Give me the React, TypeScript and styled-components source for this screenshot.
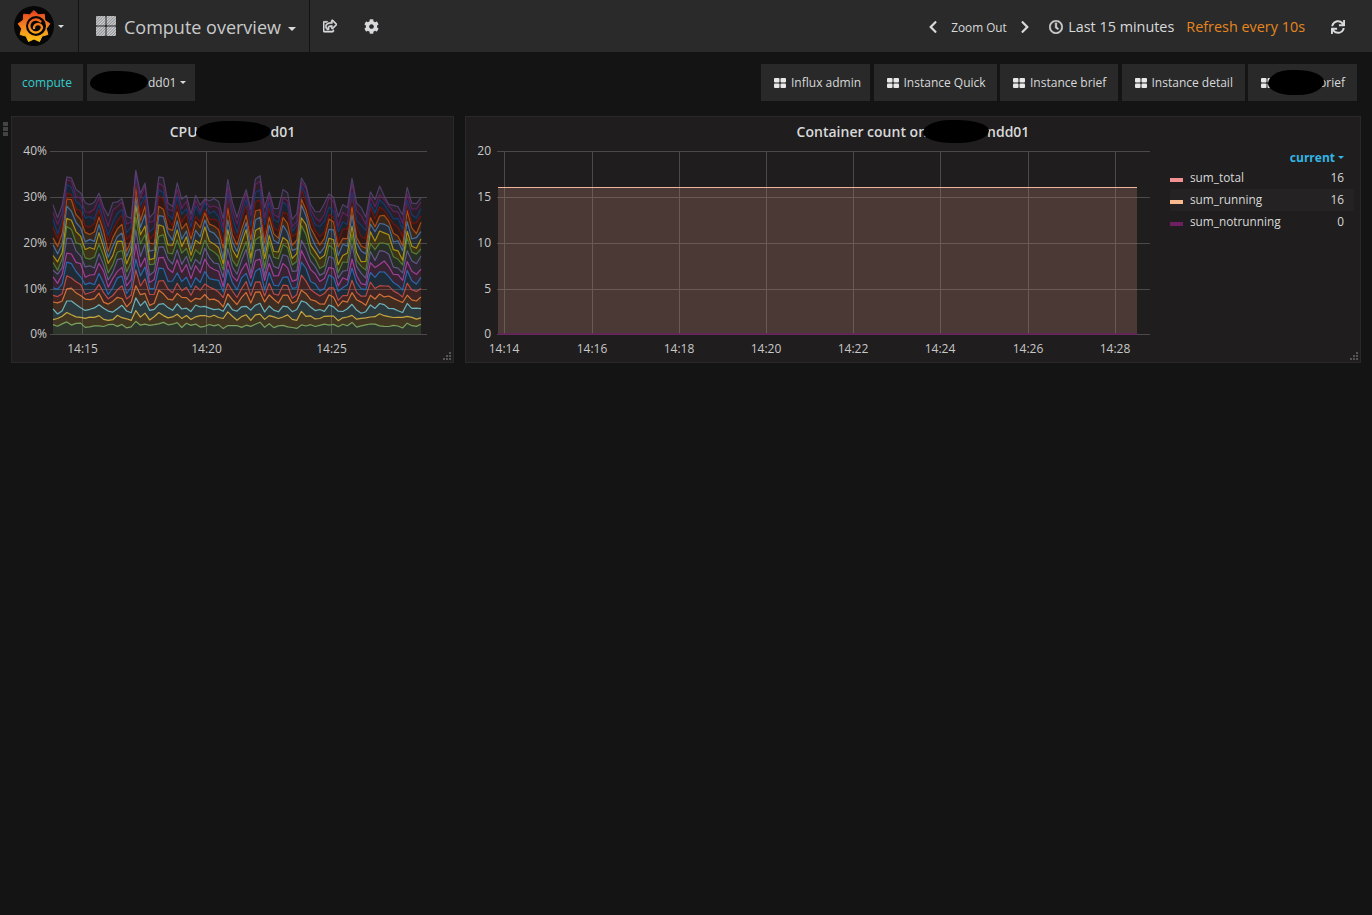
import React from "react";
import styled, { createGlobalStyle } from "styled-components";
import {
  FaChevronLeft,
  FaChevronRight,
  FaCog,
  FaRegClock,
  FaRegShareSquare,
  FaSync,
} from "react-icons/fa";

const GlobalStyle = createGlobalStyle`
  html, body {
    margin: 0;
    padding: 0;
    background: #141414;
    font-family: "Open Sans", "Liberation Sans", sans-serif;
    color: #d8d9da;
  }
`;

const PALETTE = [
  "#7eb26d", "#eab839", "#6ed0e0", "#ef843c",
  "#e24d42", "#1f78c1", "#ba43a9", "#705da0",
  "#508642", "#cca300", "#447ebc", "#c15c17",
  "#890f02", "#0a437c", "#6d1f62", "#584477",
];

const PEAKS: [number, number][] = [
  [69, 37], [78, 34], [100, 32], [120, 32], [136, 36], [145, 33], [161, 37],
  [170, 31], [178, 34], [187, 31], [197, 32], [207, 32], [216, 32], [228, 34],
  [245, 33], [258, 37], [270, 32], [285, 34], [303, 36], [312, 30], [331, 33],
  [352, 34], [372, 33], [381, 34], [391, 31], [408, 33], [420, 31],
];

// where the lower lines shoot up together
const BURSTS = [69, 136, 205, 303, 387];

const rand = (seed: number) => {
  const x = Math.sin(seed * 127.1 + 311.7) * 43758.5453;
  return x - Math.floor(x);
};

const cpuX = (i: number) => 53 + i * 4.6;
const cpuY = (v: number) => 334 - v * 4.575;
const POINTS = 81;

const buildCpuSeries = () => {
  const totals: number[] = [];
  const swell: number[] = [];
  for (let i = 0; i < POINTS; i++) {
    const x = cpuX(i);
    let v = 25 + rand(i) * 4;
    let c = -0.08 + rand(i + 200) * 0.14;
    PEAKS.forEach(([px, h]) => {
      const d = Math.abs(x - px);
      if (d < 4.5) {
        v = Math.max(v, h - d * 1.2);
        c = Math.max(c, 0.1 + rand(px) * 0.08 - d * 0.02);
      }
    });
    BURSTS.forEach((px) => {
      const d = Math.abs(x - px);
      if (d < 7) c = Math.max(c, 0.28 - d * 0.035);
    });
    totals.push(v);
    swell.push(c);
  }
  const toPoints = (vals: number[]) =>
    vals.map((v, i) => `${cpuX(i).toFixed(1)},${cpuY(v).toFixed(1)}`);
  let lower = totals.map(() => 0);
  return PALETTE.map((color, s) => {
    const share = (s + 1) / 16;
    const upper = totals.map((t, i) => {
      const bulge = 1 + swell[i] * Math.sin(Math.PI * share);
      const own = s === 15 ? 0 : (rand(i * 3 + s * 17) - 0.5) * 0.9;
      return Math.max(lower[i] + 0.2, t * share * bulge + own);
    });
    const line = toPoints(upper).join(" ");
    const back = toPoints(lower).reverse().join(" ");
    lower = upper;
    return { color, line, area: `${line} ${back}` };
  });
};

const cpuSeries = buildCpuSeries();

const Navbar = styled.header`
  display: flex;
  align-items: stretch;
  height: 52px;
  background: #2a2a2a;
`;

const NavSection = styled.div<{ $width: number }>`
  display: flex;
  align-items: center;
  box-sizing: border-box;
  width: ${(p) => p.$width}px;
  border-right: 1px solid #141414;
`;

const LogoSection = styled(NavSection)`
  padding-left: 14px;
`;

const TitleSection = styled(NavSection)`
  padding: 1px 0 0 17px;
  font-size: 18px;
  color: #c8c9ca;
`;

const DashIcon = styled.svg`
  margin: -1px 8px 0 0;
  flex: none;
`;

const Caret = styled.span<{ $margin?: number; $size?: number; $drop?: number }>`
  display: inline-block;
  width: 0;
  height: 0;
  margin-left: ${(p) => p.$margin ?? 6}px;
  margin-top: ${(p) => p.$drop ?? 0}px;
  border-left: ${(p) => p.$size ?? 3.5}px solid transparent;
  border-right: ${(p) => p.$size ?? 3.5}px solid transparent;
  border-top: ${(p) => p.$size ?? 3.5}px solid #d8d9da;
  vertical-align: middle;
`;

const IconLink = styled.span<{ $left: number; $size: number; $heavy?: boolean }>`
  display: flex;
  align-self: center;
  margin-left: ${(p) => p.$left}px;
  font-size: ${(p) => p.$size}px;
  color: #d8d9da;
  svg {
    stroke: currentColor;
    stroke-width: ${(p) => (p.$heavy ? 24 : 0)};
  }
`;

const NavRight = styled.div`
  display: flex;
  align-items: center;
  margin-left: auto;
  padding: 1px 27px 0 0;
  color: #d8d9da;
`;

const ZoomLabel = styled.span`
  width: 55px;
  margin: 0 12px 0 11px;
  font-size: 11.8px;
  white-space: nowrap;
`;

const TimeLabel = styled.span`
  margin-left: 5px;
  font-size: 14.4px;
`;

const RefreshLabel = styled.span`
  margin: 0 26px 0 12px;
  font-size: 14.4px;
  color: #e5861f;
`;

const Chevron = styled.span`
  display: flex;
  font-size: 14px;
`;

const ClockIcon = styled.span`
  display: flex;
  margin-left: 17px;
  font-size: 14px;
  svg {
    stroke: currentColor;
    stroke-width: 18;
  }
`;

const SubNav = styled.nav`
  display: flex;
  align-items: center;
  gap: 3.5px;
  padding: 12px 15px 15px 11px;
`;

const SubButton = styled.div<{ $accent?: boolean; $width: number; $padded?: boolean }>`
  display: flex;
  align-items: center;
  justify-content: ${(p) => (p.$accent ? "center" : "flex-start")};
  box-sizing: border-box;
  height: 37px;
  width: ${(p) => p.$width}px;
  padding-left: ${(p) => (p.$accent ? 0 : p.$padded ? 13 : 3.5)}px;
  background: #292929;
  font-size: 12px;
  white-space: nowrap;
  color: ${(p) => (p.$accent ? "#33cccc" : "#d8d9da")};
`;

const SubSpacer = styled.div`
  flex: 1;
`;

const LinkIcon = styled.svg`
  flex: none;
  margin-right: 5px;
`;

const Blot = styled.span<{ $w: number; $h: number; $left?: number; $right?: number }>`
  position: relative;
  z-index: 1;
  display: inline-block;
  flex: none;
  width: ${(p) => p.$w}px;
  height: ${(p) => p.$h}px;
  margin: -8px ${(p) => p.$right ?? 0}px -8px ${(p) => p.$left ?? 0}px;
  background: #000;
  border-radius: 45% 55% 50% 50% / 60% 50% 60% 50%;
`;

const Row = styled.section`
  display: flex;
  gap: 11px;
  padding: 0 11px;
`;

const Panel = styled.article<{ $width: number }>`
  position: relative;
  box-sizing: border-box;
  width: ${(p) => p.$width}px;
  height: 247px;
  background: #1f1d1d;
  border: 1px solid #292929;
`;

const PanelTitle = styled.h2`
  display: flex;
  align-items: center;
  justify-content: center;
  height: 29px;
  margin: 0 0 -7px;
  font-size: 14px;
  font-weight: 600;
  color: #d8d9da;
  white-space: pre;
`;

const PanelBody = styled.div`
  display: flex;
  align-items: flex-start;
  padding-right: 6px;
`;

const Chart = styled.svg`
  display: block;
  flex: none;
  font-family: "Open Sans", "Liberation Sans", sans-serif;
  font-size: 12px;
`;

const Legend = styled.div`
  flex: 1;
  margin: 7px 0 0 10px;
  font-size: 11.8px;
`;

const LegendHead = styled.div`
  display: flex;
  align-items: center;
  justify-content: flex-end;
  box-sizing: border-box;
  height: 21px;
  padding: 2px 10px 0 0;
  font-size: 12px;
  font-weight: 700;
  color: #33b5e5;
`;

const LegendCaret = styled(Caret)`
  margin-left: 3px;
  border-top-color: #33b5e5;
`;

const LegendRow = styled.div<{ $hover?: boolean }>`
  display: flex;
  align-items: center;
  box-sizing: border-box;
  height: 22px;
  padding: 0 10px 2px 0;
  background: ${(p) => (p.$hover ? "#242222" : "transparent")};
`;

const Swatch = styled.i<{ $color: string }>`
  display: block;
  width: 13px;
  height: 4px;
  margin: 5px 7px 0 0;
  background: ${(p) => p.$color};
`;

const LegendValue = styled.span`
  margin-left: auto;
`;

const DragHandle = styled.div`
  position: absolute;
  left: -9px;
  top: 5px;
  display: grid;
  gap: 1px;
`;

const DragDot = styled.i`
  display: block;
  width: 5px;
  height: 4px;
  background: #444;
`;

const ResizeHandle = styled.svg`
  position: absolute;
  right: 1px;
  bottom: 1px;
`;

const Corner = () => (
  <ResizeHandle width="10" height="9" viewBox="0 0 10 9">
    {[
      [7, 0], [4, 3], [7, 3], [1, 6], [4, 6], [7, 6],
    ].map(([x, y], i) => (
      <rect key={i} x={x} y={y} width="2" height="2" fill="#555" />
    ))}
  </ResizeHandle>
);

const GrafanaLogo = () => {
  const teeth = 9;
  const pts: string[] = [];
  for (let i = 0; i < teeth * 2; i++) {
    const a = (i / (teeth * 2)) * Math.PI * 2 - Math.PI / 2;
    const r = i % 2 === 0 ? 16 : 12.5;
    pts.push(`${(20 + Math.cos(a) * r).toFixed(1)},${(20.5 + Math.sin(a) * r).toFixed(1)}`);
  }
  return (
    <svg width="40" height="40" viewBox="0 0 40 40">
      <defs>
        <linearGradient id="gf" x1="0" y1="0" x2="0" y2="1">
          <stop offset="0" stopColor="#e8431f" />
          <stop offset="0.5" stopColor="#f58220" />
          <stop offset="1" stopColor="#fcc216" />
        </linearGradient>
        <linearGradient id="gfs" gradientUnits="userSpaceOnUse" x1="0" y1="12" x2="0" y2="30">
          <stop offset="0" stopColor="#ee5a22" />
          <stop offset="1" stopColor="#fbb316" />
        </linearGradient>
      </defs>
      <circle cx="20" cy="20" r="20" fill="#060606" />
      <polygon points={pts.join(" ")} fill="url(#gf)" stroke="url(#gf)" strokeLinejoin="round" />
      <circle cx="22" cy="20" r="10" fill="#060606" />
      <path
        d="M26.5 15.5 A6.5 6.5 0 1 0 28 22 A4 4 0 0 0 20 22"
        fill="none"
        stroke="url(#gfs)"
        strokeWidth="2.4"
        strokeLinecap="round"
      />
    </svg>
  );
};

const HatchedGrid = () => (
  <DashIcon width="20" height="20" viewBox="0 0 20 20">
    <defs>
      <pattern id="hatch" width="2" height="2" patternUnits="userSpaceOnUse" patternTransform="rotate(45)">
        <rect width="2" height="2" fill="#8f9091" />
        <rect width="1" height="2" fill="#d4d5d6" />
      </pattern>
    </defs>
    <rect x="0" y="0" width="9.5" height="9.5" rx="1" fill="url(#hatch)" />
    <rect x="10.5" y="0" width="9.5" height="9.5" rx="1" fill="url(#hatch)" />
    <rect x="0" y="10.5" width="9.5" height="9.5" rx="1" fill="url(#hatch)" />
    <rect x="10.5" y="10.5" width="9.5" height="9.5" rx="1" fill="url(#hatch)" />
  </DashIcon>
);

const ThLarge = () => (
  <LinkIcon width="12" height="10" viewBox="0 0 12 10">
    <rect x="0" y="0" width="5.5" height="4.5" rx="1" fill="#e8e8e8" />
    <rect x="6.5" y="0" width="5.5" height="4.5" rx="1" fill="#e8e8e8" />
    <rect x="0" y="5.5" width="5.5" height="4.5" rx="1" fill="#e8e8e8" />
    <rect x="6.5" y="5.5" width="5.5" height="4.5" rx="1" fill="#e8e8e8" />
  </LinkIcon>
);

const GRID = "#4b4949";
const GRID_OVER_FILL = "#6a5a57";
const TICK = "#c8c8c8";

const CpuChart = () => (
  <Chart width="441" height="223" viewBox="12 139 441 223">
    {[
      [151, "40%"],
      [197, "30%"],
      [243, "20%"],
      [289, "10%"],
      [334, "0%"],
    ].map(([y, label]) => (
      <g key={label}>
        <line x1="50" x2="427" y1={Number(y) + 0.5} y2={Number(y) + 0.5} stroke={GRID} />
        <text x="47" y={Number(y) + 4} textAnchor="end" fill={TICK}>
          {label}
        </text>
      </g>
    ))}
    {[
      [82, "14:15"],
      [206, "14:20"],
      [331, "14:25"],
    ].map(([x, label]) => (
      <g key={label}>
        <line x1={Number(x) + 0.5} x2={Number(x) + 0.5} y1="151" y2="334" stroke={GRID} />
        <text x={Number(x) + 0.5} y="353" textAnchor="middle" fill={TICK}>
          {label}
        </text>
      </g>
    ))}
    {cpuSeries.map((s) => (
      <g key={s.color}>
        <polygon points={s.area} fill={s.color} fillOpacity="0.16" />
        <polyline
          points={s.line}
          fill="none"
          stroke={s.color}
          strokeOpacity="0.85"
          strokeWidth="1.2"
          strokeLinejoin="round"
        />
      </g>
    ))}
  </Chart>
);

const ContainerChart = () => (
  <Chart width="694" height="223" viewBox="466 139 694 223">
    <rect x="498" y="188" width="639" height="146" fill="#4b3936" />
    {[
      [151, "20"],
      [197, "15"],
      [243, "10"],
      [289, "5"],
      [334, "0"],
    ].map(([y, label]) => (
      <g key={label}>
        <line x1="497" x2="1150" y1={Number(y) + 0.5} y2={Number(y) + 0.5} stroke={GRID} />
        {Number(y) > 190 && Number(y) < 334 && (
          <line x1="498" x2="1137" y1={Number(y) + 0.5} y2={Number(y) + 0.5} stroke={GRID_OVER_FILL} />
        )}
        <text x="491" y={Number(y) + 4} textAnchor="end" fill={TICK}>
          {label}
        </text>
      </g>
    ))}
    {[
      [504, "14:14"],
      [592, "14:16"],
      [679, "14:18"],
      [766, "14:20"],
      [853, "14:22"],
      [940, "14:24"],
      [1028, "14:26"],
      [1115, "14:28"],
    ].map(([x, label]) => (
      <g key={label}>
        <line x1={Number(x) + 0.5} x2={Number(x) + 0.5} y1="151" y2="188" stroke={GRID} />
        <line x1={Number(x) + 0.5} x2={Number(x) + 0.5} y1="188" y2="334" stroke={GRID_OVER_FILL} />
        <text x={x} y="353" textAnchor="middle" fill={TICK}>
          {label}
        </text>
      </g>
    ))}
    <line x1="498" x2="1137" y1="187.5" y2="187.5" stroke="#f0b49c" />
    <line x1="498" x2="1137" y1="334" y2="334" stroke="#6d1f62" strokeWidth="1.5" />
  </Chart>
);

const LinkButton = ({ width, children }: { width: number; children: React.ReactNode }) => (
  <SubButton $width={width} $padded>
    <ThLarge />
    {children}
  </SubButton>
);

const App: React.FC = () => {
  return (
    <>
      <GlobalStyle />
      <Navbar>
        <LogoSection $width={79}>
          <GrafanaLogo />
          <Caret $margin={4} />
        </LogoSection>
        <TitleSection $width={231}>
          <HatchedGrid />
          Compute overview
          <Caret $margin={7} $size={4} $drop={4} />
        </TitleSection>
        <IconLink $left={13} $size={14} $heavy>
          <FaRegShareSquare />
        </IconLink>
        <IconLink $left={27} $size={15}>
          <FaCog />
        </IconLink>
        <NavRight>
          <Chevron>
            <FaChevronLeft />
          </Chevron>
          <ZoomLabel>Zoom Out</ZoomLabel>
          <Chevron>
            <FaChevronRight />
          </Chevron>
          <ClockIcon>
            <FaRegClock />
          </ClockIcon>
          <TimeLabel>Last 15 minutes</TimeLabel>
          <RefreshLabel>Refresh every 10s</RefreshLabel>
          <Chevron>
            <FaSync />
          </Chevron>
        </NavRight>
      </Navbar>

      <SubNav>
        <SubButton $accent $width={72}>
          compute
        </SubButton>
        <SubButton $width={108.5}>
          <Blot $w={58} $h={23} />
          dd01
          <Caret $margin={4} />
        </SubButton>
        <SubSpacer />
        <LinkButton width={109}>Influx admin</LinkButton>
        <LinkButton width={123}>Instance Quick</LinkButton>
        <LinkButton width={118}>Instance brief</LinkButton>
        <LinkButton width={123}>Instance detail</LinkButton>
        <LinkButton width={109}>
          <Blot $w={56} $h={25} $left={-10} $right={-5} />
          brief
        </LinkButton>
      </SubNav>

      <Row>
        <Panel $width={443}>
          <DragHandle>
            <DragDot />
            <DragDot />
            <DragDot />
          </DragHandle>
          <PanelTitle>
            CPU
            <Blot $w={75} $h={22} $left={-2} />
            d01
          </PanelTitle>
          <CpuChart />
          <Corner />
        </Panel>
        <Panel $width={896}>
          <PanelTitle>
            Container count on
            <Blot $w={66} $h={23} $left={-4} $right={-2} />
            ndd01
          </PanelTitle>
          <PanelBody>
            <ContainerChart />
            <Legend>
              <LegendHead>
                current
                <LegendCaret />
              </LegendHead>
              <LegendRow>
                <Swatch $color="#f29191" />
                sum_total
                <LegendValue>16</LegendValue>
              </LegendRow>
              <LegendRow $hover>
                <Swatch $color="#f9ba8f" />
                sum_running
                <LegendValue>16</LegendValue>
              </LegendRow>
              <LegendRow>
                <Swatch $color="#6d1f62" />
                sum_notrunning
                <LegendValue>0</LegendValue>
              </LegendRow>
            </Legend>
          </PanelBody>
          <Corner />
        </Panel>
      </Row>
    </>
  );
};

export default App;
